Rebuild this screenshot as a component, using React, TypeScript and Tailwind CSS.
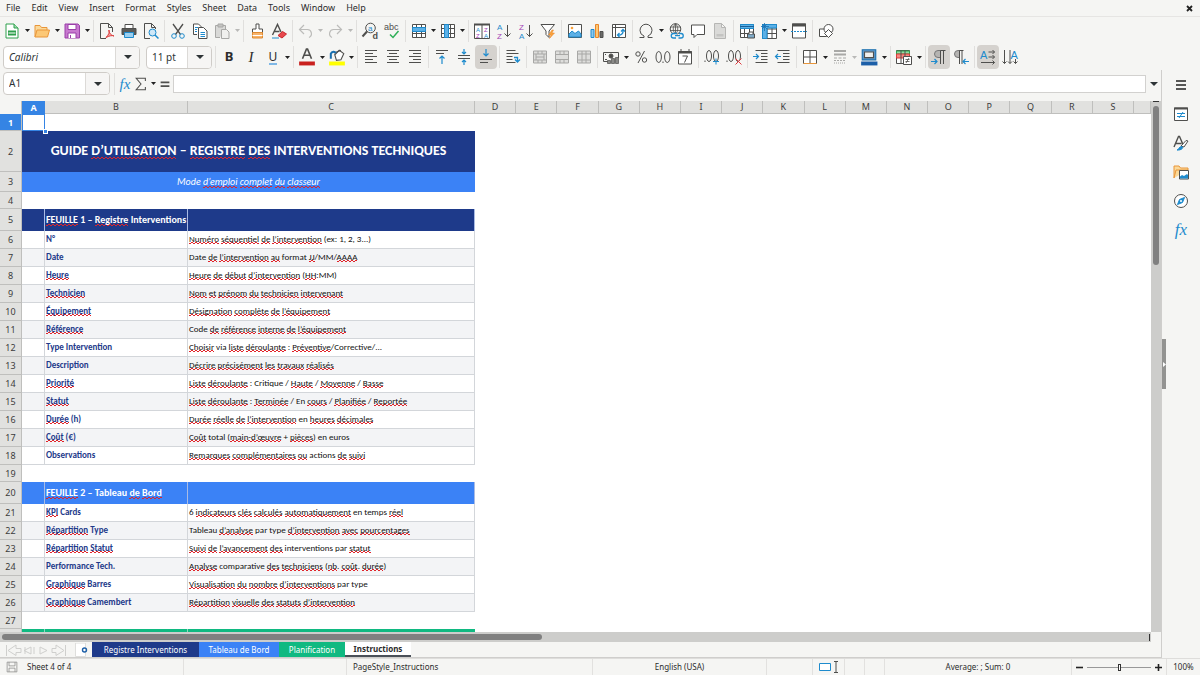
import React from 'react'
import clsx from 'clsx'

const K = '#4f4f4d'
const B = '#1e8bcd'
const G = '#a8a8a6'

function Ic({ children, s = 16 }: { children: React.ReactNode; s?: number }) {
  return (
    <svg width={s} height={s} viewBox="0 0 16 16" fill="none" stroke={K} strokeWidth="1" className="shrink-0 overflow-visible" aria-hidden="true">
      {children}
    </svg>
  )
}

function T({ x, y, s, c = K, children, b }: { x: number; y: number; s: number; c?: string; children: string; b?: boolean }) {
  return (
    <text x={x} y={y} fontSize={s} fill={c} stroke="none" fontFamily='"Liberation Sans", sans-serif' fontWeight={b ? 700 : 400}>
      {children}
    </text>
  )
}

const page = 'M2.5 .5h7l4 4v11h-11z M9.5 .5v4h4'
const grid = 'M1.5 1.5h13v13h-13z M1.5 5.5h13 M1.5 10.5h13 M5.5 1.5v13 M10.5 1.5v13'

const icons = {
  newDoc: <Ic><path d="M2 1h8l4 4v10H2z" fill="#fff" stroke="#2ea04c" /><path d="M10 1v4h4" fill="#9edcae" stroke="#2ea04c" /><path d="M4 7.500h8v5H4z" fill="#2ea04c" stroke="none" /><path d="M4.500 10h7" stroke="#fff" /></Ic>,
  open: <Ic><path d="M1 14V2.500h5l1.500 2H13V7" fill="#fbd999" stroke="#e9963a" /><path d="M1 14 3 7h12.500l-2 7z" fill="#fcc876" stroke="#e9963a" /></Ic>,
  save: <Ic><path d="M1 1h13l1.500 1.500V15H1z" fill="#c779cf" stroke="#9a3fa8" /><path d="M4 1.500h8v5H4z" fill="#fff" stroke="#9a3fa8" /><path d="M4 15v-5h8v5" fill="#fff" stroke="#9a3fa8" /><path d="M6 12h1v3H6z" fill="#9a3fa8" stroke="none" /></Ic>,
  pdf: <Ic><path d="M13.500 9V4.500l-4-4h-8v15H7" /><path d="M9.500 .5v4h4" /><path d="M7 14.500c3-3 4-6 3-7.500-1 1 1 5 5 6-2-1-5 0-8 1.500z" fill="#f6a2a2" stroke="#dc3b3b" /></Ic>,
  print: <Ic><path d="M4 5V1.500h8V5" fill="#fff" /><path d="M1 5.500h14v6H1z" fill="#5b5b59" /><path d="M3.500 9.500h9v5h-9z" fill="#9cd0f0" stroke={B} /></Ic>,
  preview: <Ic><path d="M12.500 6V4.500l-4-4h-7v15H7 M8.500 .5v4h4" /><circle cx="9.500" cy="9.500" r="3.500" fill="#cfe8f8" stroke={B} /><path d="m12 12 3.500 3.500" stroke={B} strokeWidth="1.500" /></Ic>,
  cut: <Ic><path d="M3 1 10.500 11.500M13 1 5.500 11.500" strokeWidth="1.300" /><circle cx="4" cy="13" r="2.300" stroke={B} /><circle cx="12" cy="13" r="2.300" stroke={B} /></Ic>,
  copy: <Ic><path d="M5 11.500H1.500V1h5l3 3" fill="#fff" /><path d="M6.500 4.500h5L15 8v7.500H6.500z" fill="#fff" /><path d="M8.500 9.500h4.500M8.500 11.500h4.500M8.500 13.500h4.500M3 4.500h3M3 6.500h2M3 8.500h2" stroke={B} /></Ic>,
  paste: <Ic><path d="M6 14.500H1.500v-12h10V6" fill="#d9d9d7" stroke={G} /><path d="M4 1h5v3H4z" fill="#c4c4c2" stroke={G} /><path d="M7.500 6.500h5l2.500 2.500v6.500H7.500z" fill="#f0f0ee" stroke={G} /></Ic>,
  brush: <Ic><path d="M7 1h3v5h3.500v3.500h-10V6H7z" fill="#fff" /><path d="M3.500 9.500h10v5.500h-10z" fill="#f7b36b" stroke="#e08a30" /><path d="M3.500 12.500h10" stroke="#fff" /></Ic>,
  clear: <Ic><path d="M1.500 12 6.500 1.500l3.500 7.500M3.500 8.500h5" strokeWidth="1.400" /><path d="M1 15h7" stroke={B} /><path d="m7 12.500 4.500-4 4 2.500L11 15z" fill="#e8484d" stroke="#c9252b" /></Ic>,
  undo: <Ic><path d="M6 2 1.500 6.500 6 11M1.500 6.500h8a4.200 4.200 0 0 1 1.500 8" stroke="#bcbcba" strokeWidth="1.200" /></Ic>,
  redo: <Ic><path d="m10 2 4.500 4.500L10 11M14.500 6.500h-8a4.200 4.200 0 0 0-1.500 8" stroke="#bcbcba" strokeWidth="1.200" /></Ic>,
  find: <Ic><circle cx="8.500" cy="5" r="4.800" /><path d="M5 8.500 .5 13.500" strokeWidth="2" /><T x={6} y={7.500} s={8} c={B}>a</T><T x={10.500} y={15.500} s={9} b>d</T></Ic>,
  spell: <Ic><T x={0} y={6.500} s={9}>abc</T><path d="m6 11.500 3 3L14.500 8" stroke="#2eaf57" strokeWidth="1.500" /></Ic>,
  row: <Ic><path d={grid} fill="#fff" /><path d="M1.500 4.500h13v4h-13z" fill="#5cb0e6" stroke={B} /></Ic>,
  col: <Ic><path d={grid} fill="#fff" /><path d="M4.500 1.500h4v13h-4z" fill="#5cb0e6" stroke={B} /></Ic>,
  sort: <Ic><path d="M.5 1.500h15v14H.5zM8 2v13" fill="#fff" /><path d="M0 1.500h16" strokeWidth="2" /><T x={2} y={8.500} s={6} c={B}>A</T><T x={2} y={15} s={6} c="#a33fb5">Z</T><T x={10} y={8.500} s={6} c="#a33fb5">Z</T><T x={10} y={15} s={6} c={B}>A</T></Ic>,
  az: <Ic><T x={1} y={7} s={8} c={B}>A</T><T x={1} y={16} s={8} c="#a33fb5">Z</T><path d="M11.500 2v11.500m-3-3 3 3 3-3" /></Ic>,
  za: <Ic><T x={1} y={7} s={8} c="#a33fb5">Z</T><T x={1} y={16} s={8} c={B}>A</T><path d="M11.500 2v11.500m-3-3 3 3 3-3" /></Ic>,
  filter: <Ic><path d="M1 1.500h13.500L9 8v6.500l-3-3V8z" fill="#fff" /><path d="m12 7-3.500 5h2.500l-1.500 3.500L14.500 10H12l1.500-3z" fill="#f9a13b" stroke="#e9862a" strokeWidth=".5" /></Ic>,
  image: <Ic><path d="M1.500 1.500h13v13h-13z" fill="#fff" /><path d="m2 14 0-3 3-3 3 2.500L11.500 8 14 11v3z" fill="#5cb0e6" stroke={B} /><circle cx="5" cy="5" r="1.300" fill="#f9a13b" stroke="none" /></Ic>,
  chart: <Ic><path d="M2 6.500h3v8H2z" fill="#8cc8ee" stroke={B} /><path d="M6.500 1.500h3v13h-3z" fill="#fcc876" stroke="#e9862a" /><path d="M11 8.500h3v6h-3z" fill="#6b6b69" /></Ic>,
  pivot: <Ic><path d="M1.500 1.500h13v13h-13zM1.500 4.500h13M4.500 1.500v13" fill="#fff" /><path d="M6.500 12c4 .5 6-1.500 5.500-5M10 8.500 12 6.500l2 2M8.500 10l-2 2 2 2" stroke={B} strokeWidth="1.300" /></Ic>,
  omega: <Ic><path d="M1.500 14.500h4.500v-1.500A6 6 0 0 1 2 7.500a6 6.300 0 0 1 12 0 6 6 0 0 1-4 5.500v1.500h4.500" /></Ic>,
  link: <Ic><circle cx="7.500" cy="6" r="5.300" /><path d="M2.500 4h10M2.200 7.500h10.500M7.500 .7v10.500M7.500 .7c-3 3-3 7.500 0 10.500M7.500 .7c3 3 3 7.500 0 10.500" strokeWidth=".8" /><path d="M9 10.500H5.500a2.200 2.200 0 0 0 0 4.500H8M11 10.500h2a2.200 2.200 0 0 1 0 4.500h-2.500M7 12.700h5" stroke={B} fill="#f5f5f3" strokeWidth="1.300" /></Ic>,
  comment: <Ic><path d="M1.500 2h13v9.500H7l-3 3v-3H1.500z" fill="#fff" /></Ic>,
  headfoot: <Ic><path d={page} fill="#dadad8" stroke="#b6b6b4" /><path d="M4.500 11h7v2.500h-7z" fill="#c4c4c2" stroke="none" /></Ic>,
  printArea: <Ic><path d={grid} fill="#fff" /><path d="M1.500 1.500h13v4h-13z" fill="#5cb0e6" stroke={B} /><path d="M1 3.500h14" stroke="#1a5f96" /><path d="M8.500 11h7v4h-7z" fill="#7fa9c6" /><path d="M10 11V9h4v2" fill="#fff" /></Ic>,
  freeze: <Ic><path d="M1.500 1.500h14v14h-14zM1.500 6h14M1.500 10.500h14M6 1.500v14M11 1.500v14" fill="#fff" /><path d="M1.500 1.500h14V5H6v10.500H1.500z" fill="#5cb0e6" stroke={B} /><path d="M3.500 0v8M0 3.500h8M1 1l5 5M6 1 1 6" stroke="#1a6fae" strokeWidth=".8" /></Ic>,
  split: <Ic><path d="M1.500 1h13v14h-13z" fill="#fff" /><path d="M1 2h14" strokeWidth="3" /><path d="M0 8.500h16" stroke={B} strokeDasharray="2 1" /></Ic>,
  shapes: <Ic><path d="M1.500 6h7v7.500h-7z" fill="#fff" /><circle cx="10.500" cy="6" r="4.500" fill="#fff" /><path d="M10.500 6.500 14.500 10.500l-4 4-4-4z" fill="#fff" /></Ic>,
  fontColor: <Ic s={18}><path d="M4 9.500 7.500 1h1L12 9.500M5.500 6.500h5" strokeWidth="1.400" /><path d="M1 12h14v3.500H1z" fill="#c9211e" stroke="none" /></Ic>,
  highlight: <Ic s={18}><path d="m6 6 4-4 4 3-2.500 5.500-4 .5z" fill="#fff" /><path d="m5.500 4.500 6-2.500" /><path d="M2.500 9.500V5C3.500 3 6 3 7 4.500" stroke="#1a6fae" strokeWidth="1.800" /><path d="M1 12h14v3.500H1z" fill="#ffff00" stroke="none" /></Ic>,
  left: <Ic><path d="M2 1.500h12M2 4.500h8M2 7.500h12M2 10.500h8M2 13.500h12" /></Ic>,
  center: <Ic><path d="M2 1.500h12M4 4.500h8M2 7.500h12M4 10.500h8M2 13.500h12" /></Ic>,
  right: <Ic><path d="M2 1.500h12M6 4.500h8M2 7.500h12M6 10.500h8M2 13.500h12" /></Ic>,
  top: <Ic><path d="M2 1.500h12M2 4.500h8" /><path d="M8 15V7M5.500 9.500 8 7l2.500 2.500" stroke={B} strokeWidth="1.200" /></Ic>,
  middle: <Ic><path d="M2 6.500h12M2 9.500h12" /><path d="M8 0v5M6 3l2 2 2-2M8 16v-5M6 13l2-2 2 2" stroke={B} strokeWidth="1.200" /></Ic>,
  bottom: <Ic><path d="M2 10.500h12M2 13.500h8" /><path d="M8 0v7M5.500 4.500 8 7l2.500-2.500" stroke={B} strokeWidth="1.200" /></Ic>,
  wrap: <Ic><path d="M1.500 1.500h9M1.500 4.500h12M1.500 7.500h6M1.500 10.500h6M1.500 13.500h9" /><path d="M9 8.500h3.500V13M10 10.500l2.500 2.500 2.500-2.500" stroke={B} strokeWidth="1.300" /></Ic>,
  merge: <Ic><path d="M1.500 2h13v12h-13zM1.500 5h13M1.500 11h13M6 2v3M10 2v3M4 5v6M12 5v6M6 11v3M10 11v3M4 8h8" fill="#dededc" stroke={G} /></Ic>,
  mergeCells: <Ic><path d="M1.500 2h13v12h-13zM1.500 5.500h13M1.500 10.500h13M6 2v3.500M10 2v3.500M6 10.500v3.500M10 10.500v3.500" fill="#dededc" stroke={G} /></Ic>,
  unmerge: <Ic><path d="M1.500 2h13v12h-13zM1.500 5h13M1.500 11h13M6 2v12M10 2v12" fill="#dededc" stroke={G} /></Ic>,
  currency: <Ic><path d="M.5 3.500h15V9M.5 3.500v9H6M3 5.500H2M2 10.500h2" /><circle cx="8" cy="7" r="2" fill={K} /><path d="M4.500 14.500v-3h3v3zM8.500 14.500v-5h3v5zM12.500 14.500v-6h3v6z" fill="#8a8a88" stroke={K} strokeWidth=".7" /></Ic>,
  percent: <Ic><circle cx="5" cy="5" r="2.200" /><circle cx="11.500" cy="11" r="2.200" /><path d="M11.500 2 5 14" /></Ic>,
  number: <Ic><ellipse cx="3.700" cy="8" rx="2.700" ry="5.500" /><ellipse cx="12.300" cy="8" rx="2.700" ry="5.500" /><path d="M8 12.500v1.500" /></Ic>,
  date: <Ic><path d="M1.500 2.500h13v12.500h-13z" fill="#fff" /><path d="M1 3.500h14" strokeWidth="2" /><path d="M4 0v3M12 0v3" /><path d="M5.500 7h5l-3 6.500" /></Ic>,
  addDec: <Ic><ellipse cx="5" cy="7" rx="2.500" ry="5.500" /><ellipse cx="12" cy="7" rx="2.500" ry="5.500" /><path d="M1 11.500V13" /><path d="M12 9.500v6M9 12.500h6" stroke={B} /></Ic>,
  delDec: <Ic><ellipse cx="5" cy="7" rx="2.500" ry="5.500" /><ellipse cx="12" cy="7" rx="2.500" ry="5.500" /><path d="M1 11.500V13" /><path d="m9.500 9.500 6 6M15.500 9.500l-6 6" stroke="#e0393e" /></Ic>,
  indent: <Ic><path d="M2.500 1.500h12M8 4.500h6.500M8 7.500h6.500M8 10.500h6.500M2.500 13.500h12" /><path d="M0 7.500h5.500M3 5l2.500 2.500L3 10" stroke={B} strokeWidth="1.200" /></Ic>,
  outdent: <Ic><path d="M2.500 1.500h12M8 4.500h6.500M8 7.500h6.500M8 10.500h6.500M2.500 13.500h12" /><path d="M6 7.500H.5M3 5 .5 7.500 3 10" stroke={B} strokeWidth="1.200" /></Ic>,
  borders: <Ic><path d="M1.500 1.500h13v13h-13zM8 1.500v13M1.500 8h13" fill="#fff" /><path d="M1.500 14.500h13" stroke="#e9963a" /></Ic>,
  lineStyle: <Ic><path d="M2 2h12M2 5.500h12" stroke={G} strokeWidth="2" /><path d="M2 9h12" stroke={G} strokeDasharray="3 1.500" /><path d="M2 11.500h12" stroke={G} strokeDasharray="2 1" /><path d="M2 14h12" stroke={G} strokeDasharray="1 1" /></Ic>,
  lineColor: <Ic s={18}><path d="M2 1.500h12v9H2z" fill="#5f97c9" stroke="#1a6fae" /><path d="M4 3.500h8v5H4z" fill="#f0f0ee" /><path d="M1 12h14.500v3.500H1z" fill="#1c5fa8" stroke="none" /></Ic>,
  cond: <Ic><path d="M.5 1.500h13v13H.5z" fill="#fff" /><path d="M.5 2h13v3H.5z" fill="#8fdca3" stroke="#2ea04c" /><path d="M.5 5h13v4H.5z" fill="#f28b82" stroke="#dc3b3b" /><path d="M5 1.500v13M9 1.500v7" /><path d="M7.500 7.500h8v8h-8z" fill="#fff" /><path d="M9.500 10.500h4M9.500 12.500h4M13 9l-3 5" strokeWidth=".8" /></Ic>,
  ltr: <Ic><path d="M9.500 1.500H7a3.500 3.500 0 0 0 0 7h2.500z" fill="#b5b4b2" stroke="#777" /><path d="M9.500 1.500h5M9.500 1.500V15M12.500 1.500V15" /><path d="M0 12.500h6M3.500 10 6 12.500 3.500 15" stroke={B} strokeWidth="1.200" /></Ic>,
  rtl: <Ic><path d="M6.500 1.500H5a3.500 3.500 0 0 0 0 7h1.500z" fill="#b5b4b2" stroke="#777" /><path d="M6.500 1.500h4M6.500 1.500V15M9 1.500V15" /><path d="M16 12.500h-6M12.500 10 10 12.500l2.500 2.500" stroke={B} strokeWidth="1.200" /></Ic>,
  textH: <Ic><T x={0} y={9.500} s={11} c={B}>A</T><path d="M8.500 3h6M8.500 8h6M1 13.500h13.500M12.500 1l2 2-2 2M12.500 6l2 2-2 2M12.500 11.500l2 2-2 2" /></Ic>,
  textV: <Ic><T x={8.500} y={9.500} s={11} c={B}>A</T><path d="M2.500 1v13.500M8 1v13.500M13.500 10v4.500M.5 12.500l2 2 2-2M6 12.500l2 2 2-2M11.500 12.500l2 2 2-2" /></Ic>,
}

function Tool({ label, icon, on, children }: { label: string; icon?: React.ReactNode; on?: boolean; children?: React.ReactNode }) {
  return (
    <button aria-label={label} className={clsx('flex h-6 w-[22px] shrink-0 items-center justify-center rounded', on && 'bg-[#d5d2ce]')}>
      {icon}
      {children}
    </button>
  )
}

function Drop({ label, wide, off }: { label: string; wide?: boolean; off?: boolean }) {
  return (
    <button aria-label={label} className={clsx('flex h-6 shrink-0 items-center justify-center', wide ? 'w-2' : 'w-[7px]')}>
      <svg width="5" height="3" viewBox="0 0 5 3" className="shrink-0"><path d="M0 0h5L2.500 3z" fill={off ? '#b9b9b7' : '#222'} /></svg>
    </button>
  )
}

function Sep() {
  return <div className="mx-0.5 h-[22px] w-px shrink-0 bg-[#e0dfdd]" />
}

function Combo({ label, value, className, italic }: { label: string; value: string; className: string; italic?: boolean }) {
  return (
    <div className={clsx('flex h-[23px] shrink-0 overflow-hidden rounded border border-[#cfccc8] bg-white', className)}>
      <input aria-label={label} defaultValue={value} className={clsx('w-0 flex-1 pl-[5px] text-[10px] text-[#2e3436] outline-none', italic && 'italic')} />
      <button aria-label={label + ' list'} className="flex w-6 items-center justify-center border-l border-[#dcdad7] bg-[#f6f5f4]">
        <svg width="8" height="4" viewBox="0 0 8 4"><path d="M0 0h8L4 4z" fill="#2e3436" /></svg>
      </button>
    </div>
  )
}

const menus = ['File', 'Edit', 'View', 'Insert', 'Format', 'Styles', 'Sheet', 'Data', 'Tools', 'Window', 'Help']
const letters = 'DEFGHIJKLMNOPQRS'.split('')

// words between underscores are flagged by the spell checker
const sheet1: [string, string][] = [
  ['N°', '_Numéro_ _séquentiel_ _de_ _l’intervention_ (ex: 1, 2, 3...)'],
  ['Date', 'Date _de_ _l’intervention_ _au_ format _JJ_/MM/_AAAA_'],
  ['_Heure_', '_Heure_ _de_ _début_ _d’intervention_ (_HH_:MM)'],
  ['_Technicien_', '_Nom_ _et_ _prénom_ _du_ _technicien_ _intervenant_'],
  ['_Équipement_', '_Désignation_ _complète_ _de_ _l’équipement_'],
  ['_Référence_', 'Code _de_ _référence_ _interne_ _de_ _l’équipement_'],
  ['Type Intervention', '_Choisir_ via _liste_ _déroulante_ : _Préventive_/Corrective/...'],
  ['Description', '_Décrire_ _précisément_ _les_ _travaux_ _réalisés_'],
  ['_Priorité_', '_Liste_ _déroulante_ : Critique / _Haute_ / _Moyenne_ / _Basse_'],
  ['_Statut_', '_Liste_ _déroulante_ : _Terminée_ / En _cours_ / _Planifiée_ / _Reportée_'],
  ['_Durée_ (h)', '_Durée_ _réelle_ _de_ _l’intervention_ en _heures_ _décimales_'],
  ['_Coût_ (€)', '_Coût_ total (_main-d’œuvre_ + _pièces_) en euros'],
  ['Observations', '_Remarques_ _complémentaires_ _ou_ actions _de_ _suivi_'],
]
const sheet2: [string, string][] = [
  ['_KPI_ Cards', '6 _indicateurs_ _clés_ _calculés_ _automatiquement_ en temps _réel_'],
  ['_Répartition_ Type', 'Tableau _d’analyse_ par type _d’intervention_ _avec_ _pourcentages_'],
  ['_Répartition_ _Statut_', '_Suivi_ _de_ _l’avancement_ _des_ interventions par _statut_'],
  ['Performance Tech.', '_Analyse_ comparative _des_ _techniciens_ (_nb_. _coût_. _durée_)'],
  ['_Graphique_ Barres', '_Visualisation_ _du_ _nombre_ _d’interventions_ par type'],
  ['_Graphique_ Camembert', '_Répartition_ _visuelle_ _des_ _statuts_ _d’intervention_'],
]

// two dashed one-pixel lines, shifted against each other, make the zigzag
const zigzag = '[background-image:linear-gradient(90deg,#e0242a_50%,transparent_50%),linear-gradient(90deg,transparent_50%,#e0242a_50%)] [background-size:4px_1px] [background-position:0_100%,0_calc(100%-1px)] bg-repeat-x'

function Spell({ text }: { text: string }) {
  return (
    <>
      {text.split('_').map((part, i) => (i % 2 ? <span key={i} className={zigzag}>{part}</span> : part))}
    </>
  )
}

function RowNum({ n, on }: { n: number; on?: boolean }) {
  return (
    <th scope="row" className={clsx('border-b border-r border-[#bfbfbd] p-0 pt-px text-center align-middle text-[9px] leading-3', on ? 'bg-[#3584e4] font-bold text-white' : 'bg-[#e1e1df] font-normal text-[#3c3c3c]')}>
      {n}
    </th>
  )
}

const cellFont = 'font-[Carlito,Lato,sans-serif]'

function DataRow({ n, row }: { n: number; row: [string, string] }) {
  const shaded = n < 19 ? n % 2 === 1 : n % 2 === 0
  const cell = clsx('border-b border-r border-[#d3d6da] p-0 pb-px pl-px align-middle text-[9px] leading-3 whitespace-nowrap', cellFont, shaded && 'bg-[#f3f4f6]')
  return (
    <tr className="h-[18px]">
      <RowNum n={n} />
      <td className={cell}></td>
      <td className={clsx(cell, 'font-bold text-[#1e3a8a]')}><Spell text={row[0]} /></td>
      <td className={clsx(cell, 'text-[#111]')}><Spell text={row[1]} /></td>
    </tr>
  )
}

function SectionRow({ n, text, tone }: { n: number; text: string; tone: string }) {
  const cell = 'border-r border-[#a9bbe4] p-0 pb-px pl-px align-middle whitespace-nowrap leading-3 ' + tone
  return (
    <tr className="h-[22px]">
      <RowNum n={n} />
      <td className={cell}></td>
      <td className={clsx(cell, cellFont, 'text-[10px] font-bold text-white')}><Spell text={text} /></td>
      <td className={cell}></td>
    </tr>
  )
}

function Grid() {
  const head = 'border-b border-r border-[#bfbfbd] bg-[#e1e1df] p-0 text-center text-[9px] font-normal leading-3 text-[#3c3c3c]'
  return (
    <table className="w-full table-fixed border-separate border-spacing-0">
      <colgroup>
        <col className="w-[22px]" />
        <col className="w-[23px]" />
        <col className="w-[143px]" />
        <col className="w-[287px]" />
        {letters.map(l => <col key={l} />)}
        <col className="w-[17px]" />
      </colgroup>
      <thead>
        <tr className="h-[13px]">
          <th className="border-r border-[#bfbfbd] bg-[#f5f5f3] p-0"></th>
          <th scope="col" className="bg-[#3584e4] p-0 text-center text-[9px] font-bold leading-3 text-white">A</th>
          <th scope="col" className={head}>B</th>
          <th scope="col" className={head}>C</th>
          {letters.map(l => <th scope="col" key={l} className={head}>{l}</th>)}
          <th className={head}></th>
        </tr>
      </thead>
      <tbody>
        <tr className="h-[17px]">
          <RowNum n={1} on />
          <td className="relative border border-[#3584e4] p-0">
            <span className="absolute -right-1 -bottom-1 z-10 size-[5px] border border-white bg-[#3584e4]" />
          </td>
        </tr>
        <tr className="h-[41px]">
          <RowNum n={2} />
          <td colSpan={3} className={clsx(cellFont, 'bg-[#1e3a8a] p-0 pb-[3px] text-center align-middle text-[14px] font-bold whitespace-nowrap text-white')}>
            <Spell text="GUIDE _D’UTILISATION_ – _REGISTRE_ _DES_ INTERVENTIONS TECHNIQUES" />
          </td>
        </tr>
        <tr className="h-5">
          <RowNum n={3} />
          <td colSpan={3} className={clsx(cellFont, 'bg-[#3b82f6] p-0 text-center align-middle text-[10px] leading-3 whitespace-nowrap text-white italic')}>
            <Spell text="Mode _d’emploi_ _complet_ _du_ _classeur_" />
          </td>
        </tr>
        <tr className="h-[17px]"><RowNum n={4} /></tr>
        <SectionRow n={5} text="_FEUILLE_ 1 – _Registre_ Interventions" tone="bg-[#1e3a8a]" />
        {sheet1.map((r, i) => <DataRow key={i} n={6 + i} row={r} />)}
        <tr className="h-[17px]"><RowNum n={19} /></tr>
        <SectionRow n={20} text="_FEUILLE_ 2 – Tableau _de_ _Bord_" tone="bg-[#3b82f6]" />
        {sheet2.map((r, i) => <DataRow key={i} n={21 + i} row={r} />)}
        <tr className="h-[17px]"><RowNum n={27} /></tr>
        <tr className="h-[22px]">
          <th className="border-r border-[#bfbfbd] bg-[#e1e1df]"></th>
          <td className="border-r border-[#8fd8bd] bg-[#10b981]"></td>
          <td className="border-r border-[#8fd8bd] bg-[#10b981]"></td>
          <td className="bg-[#10b981]"></td>
        </tr>
      </tbody>
    </table>
  )
}

function Sidebar() {
  const btn = 'flex h-[29px] w-full items-center justify-center'
  return (
    <aside className="relative flex w-[39px] shrink-0 flex-col items-center border-l border-[#cfcecc]">
      <button aria-label="Sidebar settings" className={btn}><Ic><path d="M3 4h10M3 8h10M3 12h10" strokeWidth="1.500" stroke="#222" /></Ic></button>
      <button aria-label="Properties" className={btn}><Ic><path d="M1.500 2h13v12.500h-13z" fill="#fff" /><path d="M1 2.500h14" strokeWidth="2" /><path d="M4 7.500h8M4 10.500h8M10 6 6 12" stroke={B} /></Ic></button>
      <button aria-label="Styles" className={btn}><Ic><path d="M1 12 5.500 1.500h1L10 9.500M2.500 8.500h6" strokeWidth="1.400" /><path d="m8 11 5-5.500 2 .5-4 6z" fill="#fff" /><path d="M4 15c2 0 2-4 5-3.500 2 1.500-1 4-5 3.500z" fill={B} stroke={B} /></Ic></button>
      <button aria-label="Gallery" className={btn}><Ic><path d="M1 14V2h5l1.500 2H15v2M1 14l2-8h12" fill="#fbd999" stroke="#e9963a" /><path d="M6.500 6.500h9v8.500h-9z" fill="#fff" /><path d="m7 14.500 0-2 2-1.500 2 1 3-2 1 1v3.500z" fill={B} stroke="none" /></Ic></button>
      <button aria-label="Navigator" className={btn}><Ic><circle cx="8" cy="8" r="6.500" fill="#fff" /><path d="m11.500 4.500-2 5-5 2 2-5z" fill={B} stroke={B} /><circle cx="8" cy="8" r="1" fill="#fff" stroke="none" /></Ic></button>
      <button aria-label="Functions" className={clsx(btn, 'font-["Liberation_Serif",serif] text-[17px] text-[#1e8bcd] italic')}>fx</button>
      <button aria-label="Hide sidebar" className="absolute top-1/2 left-0 flex h-[50px] w-1 -translate-y-1/2 items-center justify-center bg-[#939391]">
        <svg width="3" height="5" viewBox="0 0 3 5"><path d="M0 0v5l3-2.500z" fill="#fff" /></svg>
      </button>
    </aside>
  )
}

export default function App() {
  const tab = 'flex items-center justify-center text-[8px] whitespace-nowrap'
  return (
    <div className="flex h-screen flex-col overflow-hidden bg-[#f5f5f3] font-['Noto_Sans',sans-serif] text-[#2c2c2c]">
      <nav className="flex h-[17px] shrink-0 items-center border-b border-[#e6e5e3] text-[9px] leading-4">
        {menus.map(m => <button key={m} className="pr-[5px] pl-[6px]">{m}</button>)}
        <button aria-label="Close document" className="mr-[7px] ml-auto">
          <svg width="7" height="7" viewBox="0 0 7 7"><path d="m1 1 5 5M6 1 1 6" stroke="#222" strokeWidth="1.800" /></svg>
        </button>
      </nav>

      <div className="flex h-[27px] shrink-0 items-center pl-px">
        <Tool label="New" icon={icons.newDoc} /><Drop label="New options" wide />
        <Tool label="Open" icon={icons.open} /><Drop label="Open options" wide />
        <Tool label="Save" icon={icons.save} /><Drop label="Save options" wide />
        <Sep />
        <Tool label="Export as PDF" icon={icons.pdf} />
        <Tool label="Print" icon={icons.print} />
        <Tool label="Print preview" icon={icons.preview} />
        <Sep />
        <Tool label="Cut" icon={icons.cut} />
        <Tool label="Copy" icon={icons.copy} />
        <Tool label="Paste" icon={icons.paste} /><Drop label="Paste options" wide off />
        <Sep />
        <Tool label="Clone formatting" icon={icons.brush} />
        <Tool label="Clear formatting" icon={icons.clear} />
        <Sep />
        <Tool label="Undo" icon={icons.undo} /><Drop label="Undo list" off />
        <Tool label="Redo" icon={icons.redo} /><Drop label="Redo list" wide off />
        <Sep />
        <Tool label="Find and replace" icon={icons.find} />
        <Tool label="Spelling" icon={icons.spell} />
        <Sep />
        <Tool label="Row" icon={icons.row} /><Drop label="Row options" />
        <Tool label="Column" icon={icons.col} /><Drop label="Column options" />
        <Sep />
        <Tool label="Sort" icon={icons.sort} />
        <Tool label="Sort ascending" icon={icons.az} />
        <Tool label="Sort descending" icon={icons.za} />
        <Tool label="AutoFilter" icon={icons.filter} />
        <Sep />
        <Tool label="Image" icon={icons.image} />
        <Tool label="Chart" icon={icons.chart} />
        <Tool label="Pivot table" icon={icons.pivot} />
        <Sep />
        <Tool label="Special character" icon={icons.omega} /><Drop label="Character list" wide />
        <Tool label="Hyperlink" icon={icons.link} />
        <Tool label="Comment" icon={icons.comment} />
        <Tool label="Headers and footers" icon={icons.headfoot} />
        <Sep />
        <Tool label="Print area" icon={icons.printArea} />
        <Tool label="Freeze" icon={icons.freeze} /><Drop label="Freeze options" wide />
        <Tool label="Split window" icon={icons.split} />
        <Sep />
        <Tool label="Draw functions" icon={icons.shapes} />
      </div>

      <div className="flex h-[26px] shrink-0 items-center pl-[3px]">
        <Combo label="Font name" value="Calibri" italic className="w-[137px]" />
        <Combo label="Font size" value="11 pt" className="ml-1.5 mr-px w-[66px]" />
        <Sep />
        <Tool label="Bold"><span className="text-[13px] font-bold">B</span></Tool>
        <Tool label="Italic"><span className="font-['Liberation_Serif',serif] text-[15px] italic">I</span></Tool>
        <Tool label="Underline"><span className="border-b-2 border-[#7fb8e6] text-[12px] leading-[13px]">U</span></Tool><Drop label="Underline options" />
        <Sep />
        <Tool label="Font color" icon={icons.fontColor} /><Drop label="Font colors" wide />
        <Tool label="Background" icon={icons.highlight} /><Drop label="Background colors" />
        <Sep />
        <Tool label="Align left" icon={icons.left} />
        <Tool label="Center" icon={icons.center} />
        <Tool label="Align right" icon={icons.right} />
        <Sep />
        <Tool label="Align top" icon={icons.top} />
        <Tool label="Center vertically" icon={icons.middle} />
        <Tool label="Align bottom" icon={icons.bottom} on />
        <Sep />
        <Tool label="Wrap text" icon={icons.wrap} />
        <Sep />
        <Tool label="Merge and center" icon={icons.merge} />
        <Tool label="Merge cells" icon={icons.mergeCells} />
        <Tool label="Unmerge cells" icon={icons.unmerge} />
        <Sep />
        <Tool label="Currency" icon={icons.currency} /><Drop label="Currencies" wide />
        <Tool label="Percent" icon={icons.percent} />
        <Tool label="Number" icon={icons.number} />
        <Tool label="Date" icon={icons.date} />
        <Sep />
        <Tool label="Add decimal" icon={icons.addDec} />
        <Tool label="Delete decimal" icon={icons.delDec} />
        <Sep />
        <Tool label="Increase indent" icon={icons.indent} />
        <Tool label="Decrease indent" icon={icons.outdent} />
        <Sep />
        <Tool label="Borders" icon={icons.borders} /><Drop label="Border list" wide />
        <Tool label="Border style" icon={icons.lineStyle} /><Drop label="Border styles" off />
        <Tool label="Border color" icon={icons.lineColor} /><Drop label="Border colors" wide />
        <Sep />
        <Tool label="Conditional" icon={icons.cond} /><Drop label="Conditional list" wide />
        <Sep />
        <Tool label="Left to right" icon={icons.ltr} on />
        <Tool label="Right to left" icon={icons.rtl} />
        <Sep />
        <Tool label="Horizontal text" icon={icons.textH} on />
        <Tool label="Vertical text" icon={icons.textV} />
      </div>

      <div className="flex min-h-0 flex-1">
        <div className="flex min-w-0 flex-1 flex-col">
          <div className="flex h-[31px] shrink-0 items-center pb-1 pl-[3px]">
            <Combo label="Name box" value="A1" className="w-[107px]" />
            <div className="w-0.5" />
            <Sep />
            <button aria-label="Function wizard" className="w-4 font-['Liberation_Serif',serif] text-[15px] leading-5 text-[#1e8bcd] italic">fx</button>
            <button aria-label="Select function" className="flex w-4 justify-center">
              <Ic s={14}><path d="M13 4.500V1.500H2.500L8 8l-5.500 6.500H13v-3" strokeWidth="1.200" /></Ic>
            </button>
            <Drop label="Functions" wide />
            <button aria-label="Formula" className="flex w-4 justify-center"><Ic s={14}><path d="M3 6h10M3 10.500h10" strokeWidth="2" /></Ic></button>
            <input aria-label="Formula input" className="h-[18px] min-w-0 flex-1 border border-[#d2d1cf] bg-white px-1 text-[10px] outline-none" />
            <button aria-label="Expand formula bar" className="flex w-[15px] justify-center">
              <svg width="8" height="4" viewBox="0 0 8 4"><path d="M0 0h8L4 4z" fill="#2e3436" /></svg>
            </button>
          </div>
          <div className="flex min-h-0 flex-1">
            <main className="min-w-0 flex-1 overflow-hidden bg-white"><Grid /></main>
            <div className="w-2.5 shrink-0 bg-[#cdcdcb] px-0.5">
              <div className="mb-1 h-px bg-[#333]" />
              <div className="h-[30%] rounded-full bg-[#808080]" />
            </div>
          </div>
          <div className="mr-2.5 flex h-2.5 shrink-0 items-center bg-[#cdcdcb] pl-0.5">
            <div className="h-1.5 w-[47%] rounded-full bg-[#808080]" />
            <div className="mr-px ml-auto h-[7px] w-px bg-[#333]" />
          </div>
          <div className="flex h-4 shrink-0 border-b border-[#cfcecc]">
            <div className="flex w-[92px] items-center pl-[5px]">
              <svg width="62" height="12" viewBox="0 0 62 12" fill="none" stroke="#cfcfcd" className="shrink-0" aria-hidden="true">
                <path d="M1.500 1v11M11 1 3 6.500l8 5V8.500h5v-4h-5zM26 3l-7 3.500 7 3.500V3zM20 3v7M35 3l7 3.500-7 3.500V3zM29 3v7M47 4.500h4V1l8 5.500-8 5V8.500h-4zM60.500 1v11" />
              </svg>
              <button aria-label="Add sheet" className="ml-2">
                <svg width="13" height="14" viewBox="0 0 13 14" fill="none"><path d="M.5 0v13.500h10V0z" fill="#fff" stroke="#dededc" /><circle cx="9.500" cy="7" r="2" stroke="#1c5fa8" strokeWidth="1.400" /></svg>
              </button>
            </div>
            <button className={clsx(tab, 'w-[107px] bg-[#1e3a8a] text-white')}>Registre Interventions</button>
            <button className={clsx(tab, 'w-20 bg-[#3b82f6] text-white')}>Tableau de Bord</button>
            <button className={clsx(tab, 'w-[66px] bg-[#10b981] text-white')}>Planification</button>
            <button className={clsx(tab, 'w-[66px] border-b-2 border-[#4a5058] bg-white font-bold')}>Instructions</button>
          </div>
        </div>
        <Sidebar />
      </div>

      <footer className="flex h-[17px] shrink-0 items-center border-t border-[#dedddb] text-[8px] leading-4 whitespace-nowrap *:border-[#e2e1df]">
        <div className="flex w-6 justify-center">
          <Ic s={12}><path d="M1.500 1.500h13v13h-13zM4 1.500v5h8v-5M4 14.500v-5h8v5" stroke="#8a8a88" /></Ic>
        </div>
        <div className="w-[160px] border-r pl-[3px]">Sheet 4 of 4</div>
        <div className="h-4 w-[163px] border-r"></div>
        <div className="w-[246px] border-r pl-1.5">PageStyle_Instructions</div>
        <div className="w-[174px] border-r text-center">English (USA)</div>
        <div className="h-4 w-[46px] border-r"></div>
        <div className="flex h-4 w-8 items-center justify-center border-r">
          <svg width="20" height="12" viewBox="0 0 20 12" fill="none"><path d="M.5 2.500h11v7H.5z" fill="#fff" stroke={B} /><path d="M15 .5h4M15 11.500h4M17 1v10" stroke={K} /></svg>
        </div>
        <div className="h-4 w-5 border-r"></div>
        <div className="h-4 w-5 border-r"></div>
        <div className="flex-1 border-r text-center">Average: ; Sum: 0</div>
        <div className="flex h-4 w-[95px] items-center justify-center gap-1 border-r">
          <button aria-label="Zoom out"><svg width="7" height="7" viewBox="0 0 7 7"><path d="M0 3.500h7" stroke="#222" strokeWidth="1.600" /></svg></button>
          <input
            type="range"
            aria-label="Zoom"
            className="h-3 w-16 appearance-none bg-[linear-gradient(#999,#999)] bg-[length:100%_1px] bg-center bg-no-repeat [&::-webkit-slider-thumb]:h-[7px] [&::-webkit-slider-thumb]:w-[3px] [&::-webkit-slider-thumb]:appearance-none [&::-webkit-slider-thumb]:border [&::-webkit-slider-thumb]:border-[#333] [&::-webkit-slider-thumb]:bg-white"
          />
          <button aria-label="Zoom in"><svg width="7" height="7" viewBox="0 0 7 7"><path d="M0 3.500h7M3.500 0v7" stroke="#222" strokeWidth="1.600" /></svg></button>
        </div>
        <div className="w-[33px] text-center">100%</div>
      </footer>
    </div>
  )
}
